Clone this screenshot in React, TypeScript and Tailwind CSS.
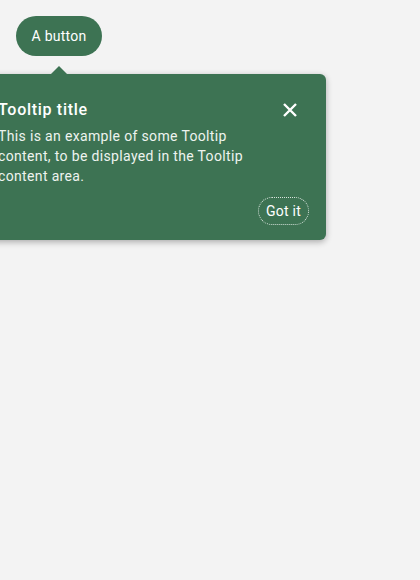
import React from "react";

export default function App() {
  return (
    <div className="relative min-h-[580px] w-[420px] overflow-hidden bg-[#f3f3f3] p-4" style={{ fontFamily: "Roboto, 'Noto Sans', sans-serif" }}>
      <button className="h-10 w-[86px] rounded-full bg-[#3d7353] text-[14px] tracking-[0.25px] text-white">A button</button>

      <div className="absolute left-[-26px] top-[74px] w-[352px] rounded-md bg-[#3d7353] shadow-[0_2px_6px_rgba(0,0,0,0.3)]">
        <div className="absolute left-[77px] top-[-8px] h-0 w-0 border-x-[8px] border-b-[8px] border-x-transparent border-b-[#3d7353]" />
        <div className="flex items-start justify-between pl-6 pr-[26px] pt-6">
          <div className="w-[262px]">
            <div className="text-[16px] font-medium leading-[24px] tracking-[0.7px] text-white">Tooltip title</div>
            <p className="mt-[4px] text-[14px] leading-[20px] tracking-[0.35px] text-[#eef3ef]">
              This is an example of some Tooltip content, to be displayed in the Tooltip content area.
            </p>
          </div>
          <svg width="20" height="20" viewBox="0 0 20 20" className="mt-[2px]" fill="none" stroke="white" strokeWidth="2.4" strokeLinecap="butt">
            <path d="M4 4 L16 16 M16 4 L4 16" />
          </svg>
        </div>
        <div className="flex justify-end pb-[15px] pr-[17px] pt-[11px]">
          <button className="h-[28px] w-[51px] rounded-full border border-dotted border-white/80 text-[14px] tracking-[0.25px] text-white">Got it</button>
        </div>
      </div>
    </div>
  );
}
